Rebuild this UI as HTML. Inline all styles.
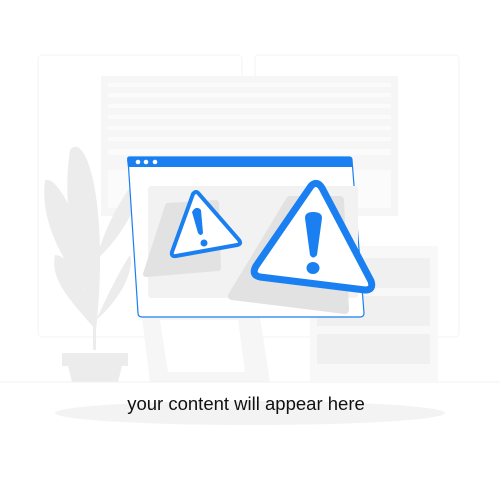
<!DOCTYPE html>
<html><head><style>body{margin:0;background:#fff}svg{display:block}</style></head><body>
<svg width="500" height="500" viewBox="0 0 500 500" xmlns="http://www.w3.org/2000/svg">
<rect x="38" y="55" width="204" height="282" rx="4" fill="none" stroke="#f3f3f3" stroke-width="1"/>
<rect x="255" y="55" width="204" height="282" rx="4" fill="none" stroke="#f3f3f3" stroke-width="1"/>
<rect x="101" y="76" width="297" height="140" fill="#f6f6f6"/>
<g fill="#fbfbfb">
<rect x="108" y="83" width="283" height="4"/><rect x="108" y="93" width="283" height="4"/>
<rect x="108" y="104" width="283" height="4"/><rect x="108" y="115" width="283" height="4"/>
<rect x="108" y="126" width="283" height="4"/><rect x="108" y="137" width="283" height="4"/>
<rect x="108" y="149" width="283" height="6"/>
<rect x="108" y="170" width="283" height="38"/>
</g>
<rect x="310" y="246" width="128" height="135" fill="#f8f8f8"/>
<rect x="317" y="258" width="113" height="30" fill="#f0f0f0"/>
<rect x="317" y="296" width="113" height="30" fill="#f0f0f0"/>
<rect x="317" y="334" width="113" height="30" fill="#f0f0f0"/>
<path d="M142 317 L150 382 L270 382 L260 317 Z" fill="#f6f6f6"/>
<path d="M160 320 L168 372 L245 372 L238 320Z" fill="#fff"/>
<g fill="#ececec">
<path d="M94 330 C80 260 60 220 70 150 C85 130 110 200 96 330Z"/>
<path d="M94 300 C60 260 40 220 45 180 C60 175 90 240 94 300Z"/>
<path d="M96 260 C110 210 130 190 140 170 C150 190 120 240 96 260Z"/>
<path d="M96 330 C70 300 50 280 55 255 C70 255 90 290 96 330Z"/>
<path d="M96 320 C110 290 120 270 130 255 C135 270 120 300 96 320Z"/>
<rect x="93" y="200" width="3" height="150"/>
<path d="M62 353 H128 V366 H122 L118 382 H72 L68 366 H62Z"/>
</g>
<line x1="0" y1="382" x2="500" y2="382" stroke="#f0f0f0" stroke-width="1"/>
<ellipse cx="250" cy="413" rx="195" ry="12" fill="#f3f3f3"/>
<path d="M128 159 Q127 157 130 157 L349 157 Q352 157 352 160 L364 313 Q364 317 360 317 L142 317 Q138 317 138 313 Z" fill="#fff" stroke="#1a7ff0" stroke-width="1.2"/>
<path d="M127 160 Q127 157 131 157 L349 157 Q352 157 352 161 L353 167 L128 167 Z" fill="#1a7ff0"/>
<circle cx="138" cy="162" r="2.3" fill="#fff"/><circle cx="146" cy="162" r="2.3" fill="#fff"/><circle cx="155" cy="162" r="2.3" fill="#fff"/>
<rect x="148" y="186" width="210" height="112" rx="3" fill="#f2f2f2"/>
<path d="M168 206 L216 203 L218 268 L146 274 Z" fill="#e2e2e2" stroke="#e2e2e2" stroke-width="6" stroke-linejoin="round"/>
<path d="M290 200 L340 200 L345 310 L232 296 Z" fill="#e2e2e2" stroke="#e2e2e2" stroke-width="8" stroke-linejoin="round"/>
<path d="M193 194 Q196 190 199 194 L239 240 Q242 244 237 245 L176 256 Q171 257 172 252 Z" fill="#fff" stroke="#1a7ff0" stroke-width="4" stroke-linejoin="round"/>
<path d="M192 212 Q196 205 201 210 L203 233 Q201 237 198 233 Z" fill="#1a7ff0"/>
<circle cx="204" cy="243" r="3.5" fill="#1a7ff0"/>
<path d="M311 186 Q317 180 322 188 L371 281 Q374 290 365 290 L260 277 Q251 275 256 266 Z" fill="#fff" stroke="#1a7ff0" stroke-width="7" stroke-linejoin="round"/>
<path d="M305 218 Q305 212 313 212 Q322 212 322 218 L317 255 Q313 260 310 255 Z" fill="#1a7ff0"/>
<ellipse cx="313" cy="268" rx="6.5" ry="6" fill="#1a7ff0"/>
<text x="246" y="410" text-anchor="middle" font-family="Liberation Sans, sans-serif" font-size="18.5" fill="#111">your content will appear here</text>
</svg>
</body></html>
